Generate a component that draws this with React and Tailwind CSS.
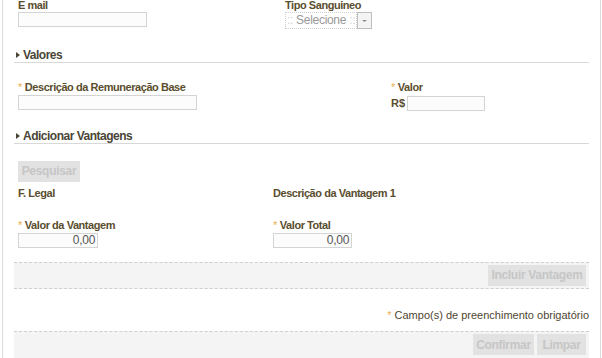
import React from 'react';

const Label = ({ children, req }) => (
    <div className="h-[13px] leading-[13px] text-[11px] font-bold tracking-[-0.45px] text-[#5a4e2e] whitespace-nowrap">
        {req && <span className="text-[#e8b04a] font-normal mr-[3px]">*</span>}
        {children}
    </div>
);

const Input = ({ w, value }) => (
    <div
        className={`h-[15px] border border-[#d4d4d4] bg-[#fcfcfc] text-[12px] leading-[13px] text-[#555] text-right pr-[2px] tracking-[-0.3px] ${w}`}
    >
        {value}
    </div>
);

const Section = ({ title }) => (
    <div className="flex items-center h-[15px] border-b border-[#d8d8d8] mx-[11px]">
        <svg width="8" height="8" viewBox="0 0 8 8" className="mr-[1px]">
            <path d="M2 1 L6 4 L2 7 Z" fill="#4a4536" />
        </svg>
        <span className="text-[12px] font-bold tracking-[-0.5px] text-[#4a4536] leading-[14px]">{title}</span>
    </div>
);

const GrayButton = ({ children, w }) => (
    <div className={`h-[21px] bg-[#e2e2e2] text-[#c6c6c6] text-[12px] font-bold tracking-[-0.3px] flex items-center justify-center ${w}`}>
        {children}
    </div>
);

export default function App() {
    return (
        <div
            className="w-[602px] h-[358px] overflow-hidden bg-white"
            style={{ fontFamily: '"Liberation Sans", Arial, sans-serif' }}
        >
            <div className="ml-[2px] mr-[1px] h-full border-l border-r border-[#dcdcdc] flex flex-col">
                <div className="flex mt-[-1px] pl-[15px]">
                    <div className="w-[267px]">
                        <Label>E mail</Label>
                        <Input w="w-[129px]" />
                    </div>
                    <div>
                        <Label>Tipo Sanguineo</Label>
                        <div className="flex h-[17px] w-[87px]">
                            <div className="flex-1 border border-dotted border-[#cfcfcf] text-[12px] leading-[15px] text-[#9a9a9a] pl-[1px] whitespace-nowrap overflow-hidden tracking-[-0.3px]">
                                <span className="text-[#d0d0d0]">::</span> Selecione <span className="text-[#d0d0d0]">::</span>
                            </div>
                            <div className="w-[15px] border border-[#bdbdbd] bg-[#f4f4f4] flex items-center justify-center">
                                <svg width="7" height="4" viewBox="0 0 7 4">
                                    <path d="M1 1 L3.5 3 L6 1 Z" fill="#8a8a8a" />
                                </svg>
                            </div>
                        </div>
                    </div>
                </div>

                <div className="mt-[19px]">
                    <Section title="Valores" />
                </div>

                <div className="flex mt-[18px] pl-[15px]">
                    <div className="w-[373px]">
                        <Label req>Descrição da Remuneração Base</Label>
                        <div className="mt-[1px]"><Input w="w-[179px]" /></div>
                    </div>
                    <div>
                        <Label req>Valor</Label>
                        <div className="flex items-center mt-[1px]">
                            <span className="text-[11px] font-bold text-[#5a4e2e] mr-[2px]">R$</span>
                            <Input w="w-[78px]" />
                        </div>
                    </div>
                </div>

                <div className="mt-[17px]">
                    <Section title="Adicionar Vantagens" />
                </div>

                <div className="pl-[15px] mt-[17px]">
                    <GrayButton w="w-[62px]">Pesquisar</GrayButton>
                </div>

                <div className="flex pl-[15px] mt-[5px]">
                    <div className="w-[255px]"><Label>F. Legal</Label></div>
                    <Label>Descrição da Vantagem 1</Label>
                </div>

                <div className="flex pl-[15px] mt-[19px]">
                    <div className="w-[255px]">
                        <Label req>Valor da Vantagem</Label>
                        <div className="mt-[1px]"><Input w="w-[80px]" value="0,00" /></div>
                    </div>
                    <div>
                        <Label req>Valor Total</Label>
                        <div className="mt-[1px]"><Input w="w-[79px]" value="0,00" /></div>
                    </div>
                </div>

                <div className="mx-[11px] mt-[14px] h-[30px] bg-[#f4f4f4] border-t border-b border-dashed border-[#cfcfcf] flex items-center justify-end pr-[3px]">
                    <GrayButton w="w-[98px]">Incluir Vantagem</GrayButton>
                </div>

                <div className="mx-[11px] mt-[19px] text-right text-[11px] leading-[14px] text-[#4f4630]">
                    <span className="text-[#e8b04a] mr-[3px]">*</span>Campo(s) de preenchimento obrigatório
                </div>

                <div className="mx-[11px] mt-[9px] h-[30px] bg-[#f4f4f4] border-t border-dashed border-[#cfcfcf] flex items-center justify-end gap-[3px] pr-[3px]">
                    <GrayButton w="w-[61px]">Confirmar</GrayButton>
                    <GrayButton w="w-[49px]">Limpar</GrayButton>
                </div>
            </div>
        </div>
    );
}
